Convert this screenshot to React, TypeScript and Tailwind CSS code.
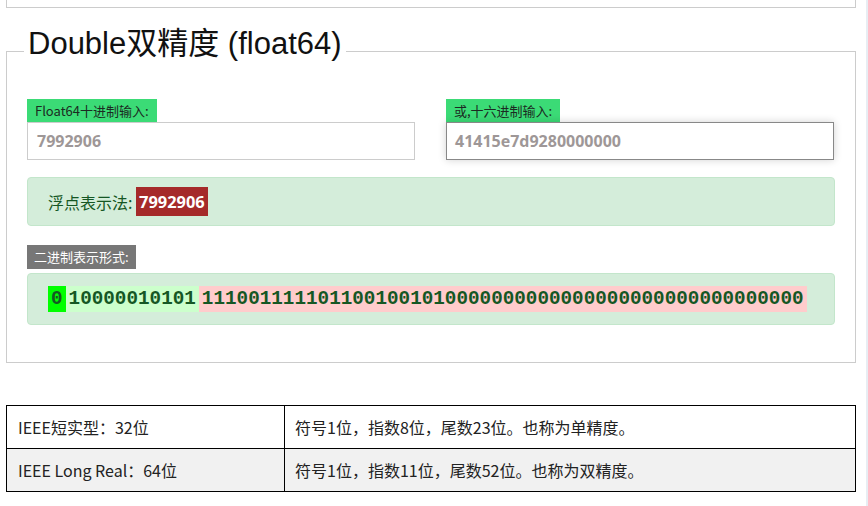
import React from "react";

const cjk = { fontFamily: '"Noto Sans CJK SC", "Noto Sans", sans-serif' };
const open = { fontFamily: '"Open Sans", "Noto Sans CJK SC", sans-serif' };
const mono = { fontFamily: '"Liberation Mono", monospace' };

export default function App() {
  const mantissa = "1110011111011001001010000000000000000000000000000000";
  return (
    <div className="flex w-[868px] h-[506px] bg-white overflow-hidden">
      <div className="ml-[6px] w-[850px] flex flex-col">
        <div className="h-[8px] border-x border-b border-[#cccccc]" />

        <div className="relative mt-[43px] h-[312px] border border-[#cccccc] px-[20px] pt-[47px]">
          <div
            className="absolute left-[17px] top-[-24px] bg-white px-[4px] text-[31px] leading-[31px] text-[#111111]"
            style={{ fontFamily: '"Liberation Sans", "Noto Sans CJK SC", sans-serif' }}
          >
            Double双精度 (float64)
          </div>

          <div className="flex gap-[31px]" style={cjk}>
            <div className="w-[388px] flex flex-col items-start">
              <div className="h-[23px] px-[8px] bg-[#3bdb76] text-[13px] leading-[23px] text-[#1c2a22]">
                Float64十进制输入:
              </div>
              <div
                className="w-[388px] h-[38px] border border-[#cccccc] pl-[9px] flex items-center text-[16px] font-bold text-[#9e9797]"
                style={open}
              >
                7992906
              </div>
            </div>
            <div className="w-[388px] flex flex-col items-start">
              <div className="h-[23px] px-[8px] bg-[#3bdb76] text-[13px] leading-[23px] text-[#1c2a22]">
                或,十六进制输入:
              </div>
              <div
                className="w-[388px] h-[38px] border border-[#888888] shadow-[0_0_8px_rgba(0,0,0,0.18)] pl-[8px] flex items-center text-[16px] font-bold text-[#9e9797]"
                style={open}
              >
                41415e7d9280000000
              </div>
            </div>
          </div>

          <div
            className="mt-[17px] h-[49px] rounded-[4px] border border-[#c3e6cb] bg-[#d4edda] pl-[20px] flex items-center text-[16px] text-[#155724]"
            style={cjk}
          >
            <span>浮点表示法:&nbsp;</span>
            <span className="bg-[#a52a2a] text-white font-bold px-[3px] h-[29px] leading-[29px] text-[16.4px]" style={open}>
              7992906
            </span>
          </div>

          <div className="mt-[19px] flex">
            <div
              className="h-[24px] px-[7px] bg-[#777777] text-white text-[13px] leading-[24px]"
              style={cjk}
            >
              二进制表示形式:
            </div>
          </div>

          <div
            className="mt-[4px] h-[52px] rounded-[4px] border border-[#c3e6cb] bg-[#d4edda] pl-[20px] flex items-center text-[19.3px] font-bold text-[#155724]"
            style={mono}
          >
            <span className="bg-[#00ff00] px-[3px] h-[26px] leading-[26px]">0</span>
            <span className="bg-[#ccffcc] px-[3px] h-[26px] leading-[26px]">10000010101</span>
            <span className="bg-[#ffcccc] px-[3px] h-[26px] leading-[26px]">{mantissa}</span>
          </div>
        </div>

        <table className="mt-[42px] w-[850px] border-collapse text-[16px] text-[#222222]" style={cjk}>
          <tbody>
            <tr className="bg-white">
              <td className="w-[278px] h-[43px] border border-black pl-[11px] py-0">IEEE短实型：32位</td>
              <td className="h-[43px] border border-black pl-[10px] py-0">符号1位，指数8位，尾数23位。也称为单精度。</td>
            </tr>
            <tr className="bg-[#f1f1f1]">
              <td className="w-[278px] h-[43px] border border-black pl-[11px] py-0">IEEE Long Real：64位</td>
              <td className="h-[43px] border border-black pl-[10px] py-0">符号1位，指数11位，尾数52位。也称为双精度。</td>
            </tr>
          </tbody>
        </table>
      </div>
      <div className="ml-auto w-[2px] h-full bg-[#e8edf3]" />
    </div>
  );
}
